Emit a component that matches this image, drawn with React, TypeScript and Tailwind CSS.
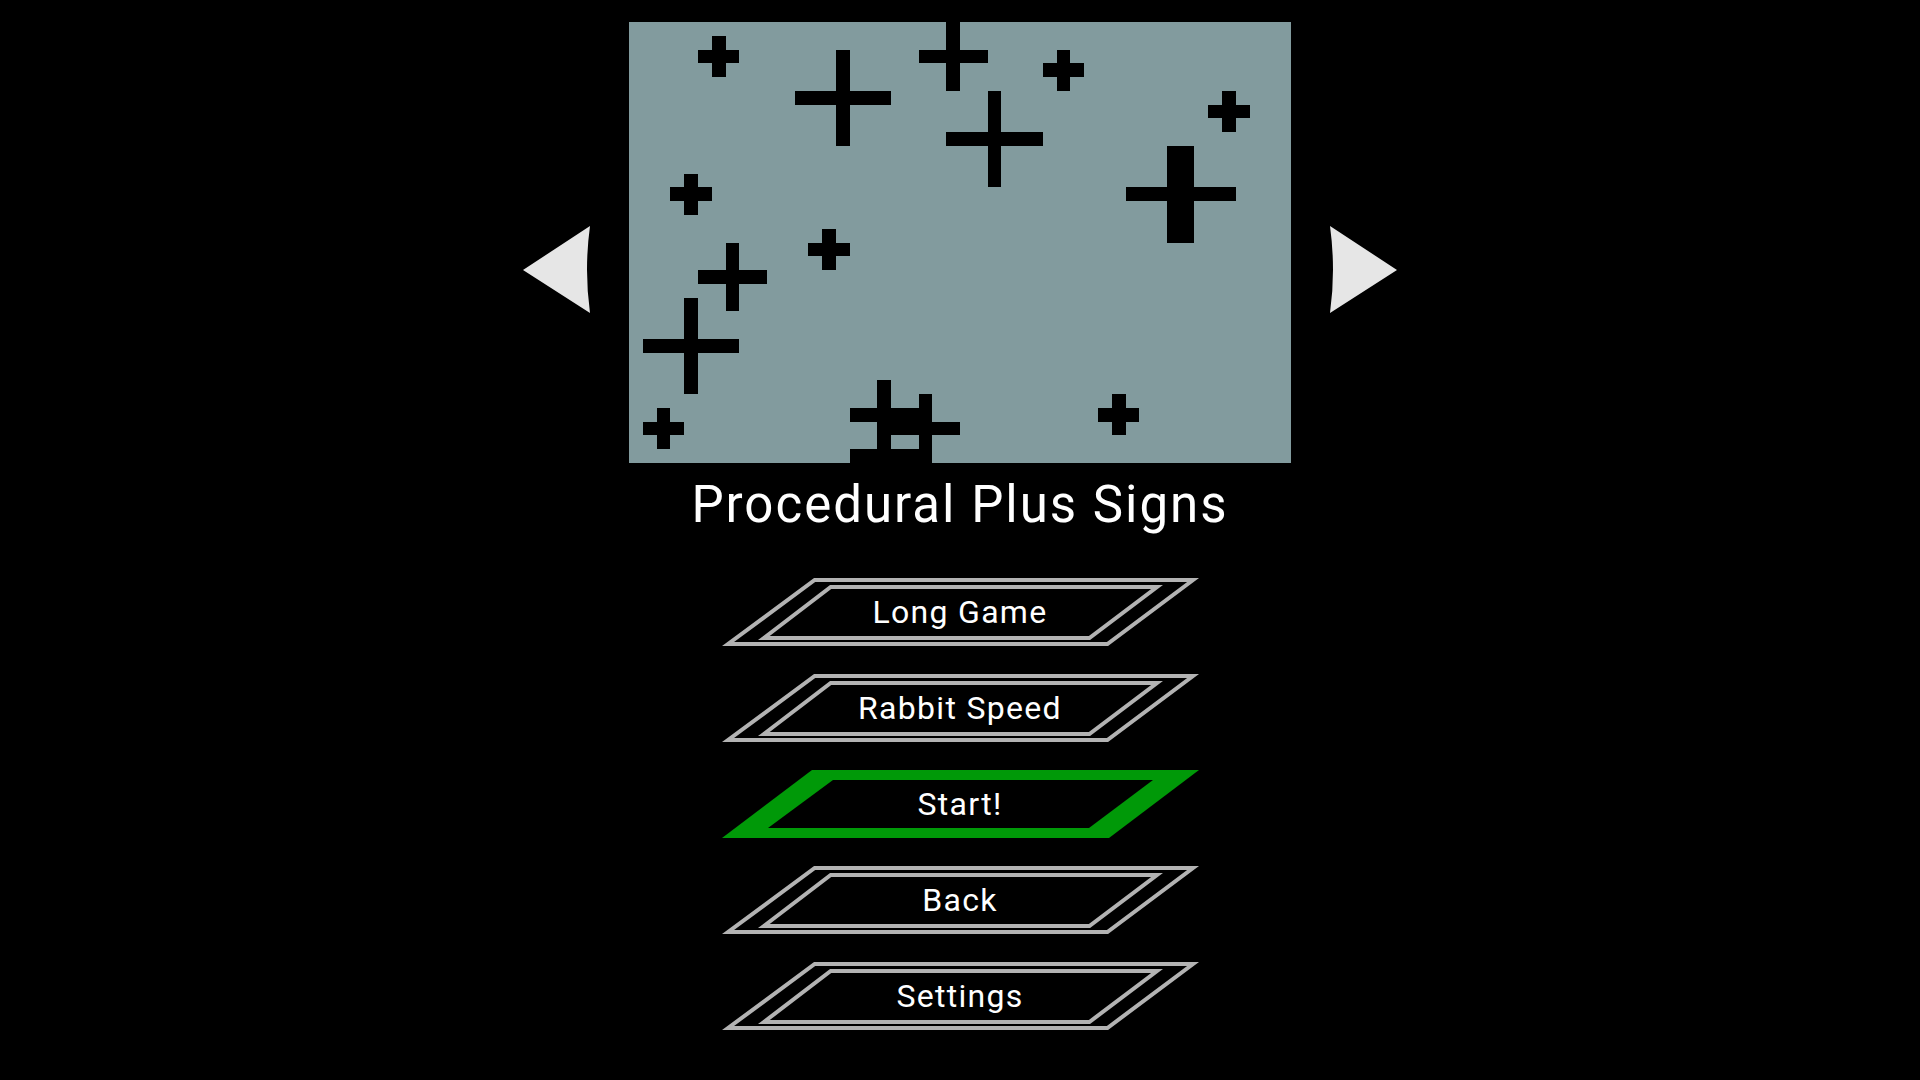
// App.tsx – game mode select screen: level preview, title and stacked menu buttons
const crosses: [number, number, number][] = [
  [6, 2, 1],
  [15, 5, 3],
  [23, 2, 2],
  [31, 3, 1],
  [43, 6, 1],
  [26, 8, 3],
  [39, 12, 3],
  [40, 12, 3],
  [4, 12, 1],
  [14, 16, 1],
  [7, 18, 2],
  [4, 23, 3],
  [2, 29, 1],
  [35, 28, 1],
  [18, 28, 2],
  [21, 29, 2],
  [18, 31, 2],
];

const buttons = [
  { label: "Long Game", active: false },
  { label: "Rabbit Speed", active: false },
  { label: "Start!", active: true },
  { label: "Back", active: false },
  { label: "Settings", active: false },
];

function Preview() {
  return (
    <div className="h-[441px] w-[662px] bg-[#829b9e]">
      <svg viewBox="0 0 48 32" preserveAspectRatio="none" shapeRendering="crispEdges" className="h-full w-full">
        {crosses.map(([cx, cy, arm], i) => (
          <g key={i} fill="#000">
            <rect x={cx - arm} y={cy} width={arm * 2 + 1} height={1} />
            <rect x={cx} y={cy - arm} width={1} height={arm * 2 + 1} />
          </g>
        ))}
      </svg>
    </div>
  );
}

function Arrow({ dir }: { dir: "left" | "right" }) {
  const d = dir === "left" ? "M68 0 Q62 44 68 87 L1 44 Z" : "M0 0 Q6 44 0 87 L67 44 Z";
  return (
    <svg width="68" height="88" viewBox="0 0 68 88" className="mt-[204px] shrink-0">
      <path d={d} fill="#e6e6e6" />
    </svg>
  );
}

function MenuButton({ label, active }: { label: string; active: boolean }) {
  return (
    <div className="relative h-[68px] w-[480px]">
      <svg width="480" height="68" viewBox="0 0 480 68" className="absolute inset-0">
        {active ? (
          <>
            <polygon points="92,0 479,0 389,68 2,68" fill="#009908" />
            <polygon points="113,10 433,10 369,58 48,58" fill="#000" />
          </>
        ) : (
          <g fill="none" stroke="#b3b3b3" strokeWidth="4" strokeLinejoin="miter">
            <polygon points="94.7,2 473,2 387.4,66 8.1,66" />
            <polygon points="110.7,9 437,9 369.4,60 43.9,60" />
          </g>
        )}
      </svg>
      <div className="relative flex h-full items-center justify-center">
        <span className="font-['Roboto',sans-serif] text-[32px] leading-[32px] tracking-[1.3px] text-white">{label}</span>
      </div>
    </div>
  );
}

export default function App() {
  return (
    <div className="flex h-screen w-full flex-col items-center overflow-hidden bg-black pt-[22px]">
      <div className="flex items-start gap-[39px]">
        <Arrow dir="left" />
        <Preview />
        <Arrow dir="right" />
      </div>
      <h1 className="mt-[16px] font-['Roboto',sans-serif] text-[51px] leading-[51px] tracking-[2px] text-white">
        Procedural Plus Signs
      </h1>
      <div className="mt-[48px] flex flex-col gap-[28px]">
        {buttons.map((b) => (
          <MenuButton key={b.label} label={b.label} active={b.active} />
        ))}
      </div>
    </div>
  );
}
